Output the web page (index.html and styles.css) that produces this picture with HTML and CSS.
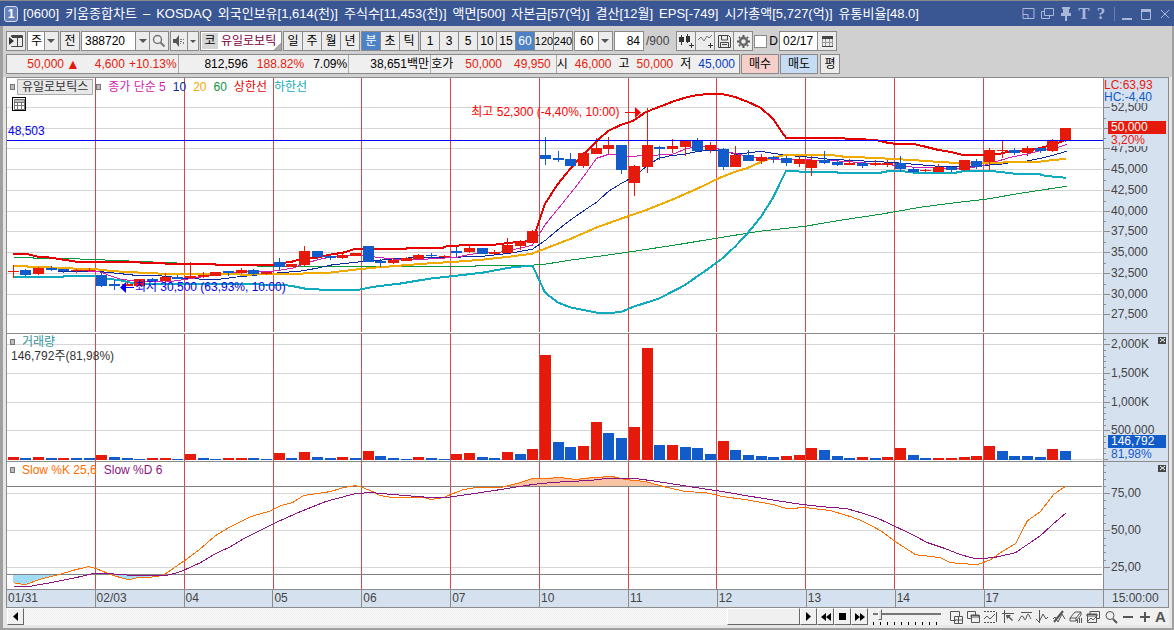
FILE: index.html
```html
<!DOCTYPE html>
<html lang="ko">
<head>
  <meta charset="UTF-8">
  <meta name="viewport" content="width=device-width, initial-scale=1.0">
  <title>[0600] 키움종합차트</title>
  <link rel="stylesheet" href="styles.css">
</head>
<body>

  <header class="titlebar">
    <span class="win-no">1</span>
    <h1 class="title">
      <span>[0600]</span><span>키움종합차트</span><span>–</span><span>KOSDAQ</span>
      <span>외국인보유[1,614(천)]</span><span>주식수[11,453(천)]</span><span>액면[500]</span>
      <span>자본금[57(억)]</span><span>결산[12월]</span><span>EPS[-749]</span>
      <span>시가총액[5,727(억)]</span><span>유통비율[48.0]</span>
    </h1>
    <div class="win-buttons">
      <button aria-label="화면분리"><svg width="13" height="13"><path d="M1 1.5h11v10H1zM1 7.5h5v4" /></svg></button>
      <button aria-label="화면복사"><svg width="14" height="13"><path d="M4.500 1.500h9v7h-9zM4 4.500H1.500v7h8V9" /></svg></button>
      <button aria-label="고정"><svg width="12" height="14"><path class="solid" d="M2 0h8v2H9v4h2v3H1V6h2V2H2zM5 9h2v5H5z" /></svg></button>
      <button class="serif">T</button>
      <button class="serif">?</button>
      <i class="bar"></i>
      <button aria-label="최소화"><svg width="12" height="12"><path class="solid" d="M1 10h10v2H1z" /></svg></button>
      <button aria-label="최대화"><svg width="12" height="12"><path d="M1.500 2v9.500h9V2" /><path class="solid" d="M1 1h10v3H1z" /></svg></button>
      <button aria-label="닫기"><svg width="12" height="12"><path d="M2 2l8 8M10 2l-8 8" /></svg></button>
    </div>
  </header>

  <main class="frame">
    <div class="toolbar">
      <button class="btn" aria-label="목록"><svg width="16" height="14"><path d="M3.500 3V1.500h11v11h-11V12M9.500 2v10" stroke="#444" fill="none" /><path d="M1 3l5 4-5 4z" fill="#333" /><path d="M4 2h10v2H4z" fill="#444" /></svg></button>
      <label class="combo unit"><select aria-label="종목구분"><option>주</option></select><i class="arrow"></i></label>
      <button class="btn">전</button>
      <div class="group">
        <input class="code" type="text" value="388720" aria-label="종목코드">
        <button class="btn drop" aria-label="종목목록"><i class="arrow"></i></button>
        <button class="btn" aria-label="종목검색"><svg width="14" height="14"><circle cx="5.500" cy="5.500" r="4" stroke="#777" stroke-width="1.500" fill="none" /><path d="M8.500 8.500l4 4" stroke="#777" stroke-width="2" /></svg></button>
      </div>
      <div class="group">
        <button class="btn sound" aria-label="음성"><svg width="14" height="12"><path d="M1 4h3l3-4v12L4 8H1z" fill="#555" /><path d="M8 4h2v1H8zM11 4h1v1h-1zM8 6h2v1H8zM11 7h1v2h-1zM8 8h1v1H8z" fill="#777" /></svg></button>
        <button class="btn drop" aria-label="음성설정"><i class="arrow"></i></button>
      </div>
      <div class="stock"><span class="market">코</span><span class="stock-name">유일로보틱</span></div>
      <div class="group">
        <button class="btn">일</button><button class="btn">주</button><button class="btn">월</button><button class="btn">년</button>
      </div>
      <div class="group">
        <button class="btn on">분</button><button class="btn">초</button><button class="btn">틱</button>
      </div>
      <div class="group">
        <button class="btn">1</button><button class="btn">3</button><button class="btn">5</button><button class="btn">10</button><button class="btn">15</button><button class="btn on">60</button><button class="btn narrow">120</button><button class="btn narrow">240</button>
      </div>
      <label class="combo minute"><select aria-label="분"><option>60</option></select><i class="arrow"></i></label>
      <label class="count"><input type="text" value="84" aria-label="봉 개수">/900</label>
      <div class="group tools">
        <button class="btn" aria-label="종목추가"><svg width="17" height="16"><path d="M1 4h5v5H1zM3 2h1v10H3zM8 3h4v6H8zM9 1h1v9H9zM11 12h5v1h-5zM13 10h1v5h-1z" fill="#333" /></svg></button>
        <button class="btn" aria-label="지표추가"><svg width="17" height="16"><path d="M1 7l3-3 3 4 3-5 2 2 3-3" stroke="#777" fill="none" /><path d="M11 12h5v1h-5zM13 10h1v5h-1z" fill="#333" /></svg></button>
        <button class="btn" aria-label="저장"><svg width="15" height="15"><path d="M1.500 1.500h10l2 2v10h-12zM4.500 2v4h6V2M3.500 13V8.500h8V13M5 10.500h5" stroke="#444" fill="none" /></svg></button>
        <button class="btn" aria-label="설정"><svg width="15" height="15"><circle cx="7.500" cy="7.500" r="3.500" stroke="#666" stroke-width="2.500" fill="none" /><path d="M7.500 1v2M7.500 12v2M1 7.500h2M12 7.500h2M3 3l1 1M11 11l1 1M12 3l-1 1M3 12l1-1" stroke="#555" stroke-width="2" /></svg></button>
      </div>
      <label class="check"><input type="checkbox">D</label>
      <div class="group">
        <input class="date" type="text" value="02/17" aria-label="조회일">
        <button class="btn" aria-label="달력"><svg width="13" height="12"><path d="M1 1h11v3H1z" fill="#444" /><path d="M1.500 4v7.500h10V4M4.500 4v7M8.500 4v7M1 7.500h11" stroke="#999" fill="none" /><path d="M1 11h11v1H1z" fill="#444" /></svg></button>
      </div>
    </div>

    <div class="quote-row">
      <div class="quote">
        <div class="cell price"><span>50,000</span><span class="up">▲</span><span class="diff">4,600</span><span>+10.13%</span></div>
        <div class="cell volume"><span>812,596</span><span class="red">188.82%</span><span>7.09%</span></div>
        <div class="cell amount"><span>38,651백만</span></div>
        <div class="cell asks"><span>호가</span><span class="red">50,000</span><span class="red">49,950</span></div>
        <div class="cell ohl"><span>시</span><span class="red">46,000</span><span>고</span><span class="red">50,000</span><span>저</span><span class="blue">45,000</span></div>
      </div>
      <button class="btn buy">매수</button>
      <button class="btn sell">매도</button>
      <button class="btn avg">평</button>
    </div>

    <section class="chart">
      <div class="pane pane-price">
        <div class="plot">
          <svg id="priceChart" viewBox="7 78 1096 255" preserveAspectRatio="none"></svg>
          <div class="legend">
            <i class="dot"></i><span class="legend-name">유일로보틱스</span><i class="dot"></i>
            <span class="ma5">종가 단순 5</span><span class="ma10">10</span><span class="ma20">20</span><span class="ma60">60</span><span class="upper">상한선</span><span class="lower">하한선</span>
          </div>
          <button class="grid-btn" aria-label="데이터 표"><svg width="11" height="11"><path d="M.500.500h10v10H.500zM0 3.500h11M0 6.500h11M3.500 0v11M7.500 0v11" stroke="#777" fill="none" /><path d="M1 1h9v2H1z" fill="#bbb" /></svg></button>
          <span class="line-label">48,503</span>
          <span class="note high">최고 52,300 (-4,40%, 10:00)<svg width="16" height="11"><path d="M0 5h10V0l6 5.500-6 5.500V6H0z" /></svg></span>
          <span class="note low"><svg width="14" height="11"><path d="M14 5H6V0L0 5.500 6 11V6h8z" /></svg>최저 30,500 (63,93%, 10:00)</span>
        </div>
        <div class="axis" id="priceAxis">
          <svg viewBox="0 78 64 255" preserveAspectRatio="none"></svg>
          <div class="corner"><span class="red">LC:63,93</span><span class="sky">HC:-4,40</span></div>
          <div class="tag tag-price"><b>50,000</b><span>3,20%</span></div>
        </div>
      </div>

      <div class="pane pane-volume">
        <div class="plot">
          <svg id="volumeChart" viewBox="7 334 1096 127" preserveAspectRatio="none"></svg>
          <div class="legend"><i class="dot"></i><span class="vol-name">거래량</span></div>
          <span class="vol-value">146,792주(81,98%)</span>
        </div>
        <div class="axis" id="volumeAxis">
          <svg viewBox="0 334 64 127" preserveAspectRatio="none"></svg>
          <button class="close" aria-label="지표 닫기"><svg width="9" height="8"><path d="M2 2l5 4M7 2L2 6" /></svg></button>
          <div class="tag tag-volume"><b>146,792</b><span>81,98%</span></div>
        </div>
      </div>

      <div class="pane pane-slow">
        <div class="plot">
          <svg id="slowChart" viewBox="7 462 1096 127" preserveAspectRatio="none">
            <clipPath id="over"><rect x="7" y="462" width="1050" height="24" /></clipPath>
            <clipPath id="under"><rect x="7" y="574" width="1050" height="15" /></clipPath>
          </svg>
          <div class="legend"><i class="dot"></i><span class="slow-k">Slow %K 25,6</span><span class="slow-d">Slow %D 6</span></div>
        </div>
        <div class="axis" id="slowAxis">
          <svg viewBox="0 462 64 127" preserveAspectRatio="none"></svg>
          <button class="close" aria-label="지표 닫기"><svg width="9" height="8"><path d="M2 2l5 4M7 2L2 6" /></svg></button>
        </div>
      </div>

      <div class="dates">
        <div class="days">
          <span>01/31</span><span>02/03</span><span>04</span><span>05</span><span>06</span><span>07</span><span>10</span><span>11</span><span>12</span><span>13</span><span>14</span><span>17</span>
        </div>
        <span class="time">15:00:00</span>
      </div>
    </section>

    <footer class="bottom">
      <button class="raised" aria-label="왼쪽으로"><svg width="6" height="9"><path d="M5 0v9L0 4.500z" /></svg></button>
      <div class="track"><div class="thumb raised"></div></div>
      <button class="raised" aria-label="오른쪽으로"><svg width="5" height="9"><path d="M0 0v9l5-4.500z" /></svg></button>
      <button class="raised" aria-label="뒤로"><svg width="10" height="8"><path d="M5 0v8L0 4zM10 0v8L5 4z" /></svg></button>
      <button class="raised" aria-label="정지"><svg width="7" height="7"><path d="M0 0h7v7H0z" /></svg></button>
      <button class="raised" aria-label="앞으로"><svg width="10" height="8"><path d="M0 0v8l5-4zM5 0v8l5-4z" /></svg></button>
      <div class="zoom"><input type="range" min="0" max="100" value="8" aria-label="확대"></div>
      <div class="tools-row">
        <button aria-label="화면추가"><svg viewBox="0 0 14 14"><path d="M7 10.500H1.500v-9h9V6M5.500 6.500h8v7h-8zM9.500 7v6M6 10h7" /></svg></button>
        <button aria-label="화면겹침"><svg viewBox="0 0 14 14"><path d="M5 8.500H1.500v-7h8V5M5.500 5.500h8v7h-8z" /><path d="M5 5h8v2H5z" /></svg></button>
        <button aria-label="영역"><svg viewBox="0 0 14 14"><path d="M1 1.500h12M1 12.500h12" stroke-dasharray="2 1" /><path d="M1 9l3-3 3 3 5-5M13.500 2v10" /></svg></button>
        <button aria-label="커서"><svg viewBox="0 0 14 14"><path d="M1 3.500h12M3.500 0v13" /><path class="solid" d="M5 5h5L8.500 6.500 12 10l-1 1-3.500-3.500L6 9z" /></svg></button>
        <button aria-label="수평선"><svg viewBox="0 0 14 14"><path d="M3 2.500h11" /><path d="M0 11c2 0 2-5 4-5s2 4 3 4 2-6 3-6 2 4 3 5" /></svg></button>
        <button aria-label="수직선"><svg viewBox="0 0 14 14"><path d="M4.500 0v13" /><path d="M1 9l3 3 4-8 3 5 2-2" /></svg></button>
        <button aria-label="추세선"><svg viewBox="0 0 14 14"><path d="M2 12L11 1" stroke-width="2" /><path d="M1 9l2-2 3 5 4-8 3 5" /></svg></button>
        <button aria-label="지우기"><svg viewBox="0 0 14 14"><path d="M1 8l5-6h6l-5 6zM1 8v3h6V8M7 11l5-6V2M8.500 13v-3M10.500 13V8M12.500 13V8" /></svg></button>
        <button aria-label="보조창"><svg viewBox="0 0 14 14"><path d="M4 4V1.500h9.500v7H11M1.500 4.500h9v8h-9zM2 11l3-3 2 2 3-3" /><path d="M1 4h10v2H1z" /></svg></button>
        <button aria-label="돋보기"><svg viewBox="0 0 14 14"><circle cx="6" cy="5.500" r="4" /><path d="M9 9l4 4" stroke-width="2" /></svg></button>
        <button aria-label="축소"><svg viewBox="0 0 14 14"><path d="M2 7h10" stroke-width="2" /></svg></button>
        <button aria-label="확대"><svg viewBox="0 0 14 14"><path d="M2 7h10M7 2v10" stroke-width="2" /></svg></button>
        <button class="letter">A</button>
      </div>
    </footer>
  </main>

  <script src="chart.js"></script>
</body>
</html>
```
FILE: styles.css
```css
* {
  box-sizing: border-box;
}

body {
  margin: 0;
  height: 100vh;
  min-height: 400px;
  display: flex;
  flex-direction: column;
  font-family: "Liberation Sans", "Noto Sans CJK KR", sans-serif;
  font-size: 12px;
  line-height: 14px;
  color: #000;
  background-color: #a0a0a0;
  overflow: hidden;
}

button, input, select {
  font: inherit;
  color: inherit;
  margin: 0;
  padding: 0;
  border: none;
  border-radius: 0;
}

button {
  display: flex;
  align-items: center;
  justify-content: center;
  white-space: nowrap;
  cursor: pointer;
  background: none;
}

svg {
  display: block;
  flex-shrink: 0;
}

.red {
  color: #e61a0a;
}

.blue {
  color: #0a3cc8;
}

.sky {
  color: #115bcb;
}

/* Title bar */
.titlebar {
  height: 26px;
  flex-shrink: 0;
  display: flex;
  align-items: center;
  padding: 0 0 0 4px;
  background-color: #3a5693;
  border-top: 1px solid #8a8a8a;
  color: #fff;
}

.win-no {
  width: 14px;
  height: 16px;
  border: 1px solid #d5def0;
  border-radius: 3px;
  background-color: #6681bb;
  font-weight: bold;
  text-align: center;
}

.title {
  display: flex;
  flex: 1;
  gap: 6px;
  margin: 0 0 0 5px;
  font-size: 13px;
  font-weight: normal;
  white-space: nowrap;
}

.win-buttons {
  display: flex;
  align-items: center;
  gap: 1px;
  color: #a9b8d8;
}

.win-buttons button {
  width: 18px;
  height: 20px;
}

.win-buttons path {
  fill: none;
  stroke: #a9b8d8;
}

.win-buttons .solid {
  fill: #a9b8d8;
  stroke: none;
}

.win-buttons .serif {
  width: 16px;
  font: bold 17px "Liberation Serif", serif;
}

.win-buttons .bar {
  width: 1px;
  height: 14px;
  margin: 0 2px 0 4px;
  background-color: #6a80b0;
}

.frame {
  flex: 1;
  min-height: 0;
  display: flex;
  flex-direction: column;
  margin: 0 2px 2px 3px;
  background-color: #e6e6e6;
}

/* Toolbar */
.toolbar, .quote-row {
  display: flex;
  gap: 1px;
  padding-left: 3px;
  background-color: #d0d0d0;
  flex-shrink: 0;
}

.toolbar {
  padding-top: 5px;
  padding-bottom: 3px;
}

.quote-row {
  padding-bottom: 3px;
}

.btn {
  min-width: 20px;
  height: 20px;
  border: 1px solid #8a8a8a;
  background-color: #ececec;
}

.btn.narrow {
  width: 20px;
  font-size: 11px;
}

.group {
  display: flex;
}

.group > * + * {
  margin-left: -1px;
}

.btn.on {
  background-color: #4e82c6;
  color: #fff;
}

.btn.drop {
  min-width: 15px;
}

.btn.sound {
  min-width: 18px;
}

.sound + .btn.drop {
  min-width: 12px;
}

.arrow {
  border: 4px solid transparent;
  border-top-color: #555;
  border-bottom-width: 0;
}

.sound + .drop .arrow {
  border-width: 3px 3px 0;
}

.combo {
  display: flex;
  align-items: center;
  position: relative;
  height: 20px;
  border: 1px solid #8a8a8a;
  background: linear-gradient(to left, #ececec 13px, #8a8a8a 13px, #8a8a8a 14px, #fff 14px);
}

.combo select {
  appearance: none;
  width: 100%;
  height: 18px;
  padding-left: 3px;
  background: none;
}

.combo .arrow {
  position: absolute;
  right: 3px;
  pointer-events: none;
}

.unit {
  width: 32px;
}

.minute {
  width: 39px;
}

.minute select {
  padding-left: 5px;
}

.toolbar input[type="text"] {
  height: 20px;
  border: 1px solid #8a8a8a;
  background-color: #fff;
}

.toolbar .code {
  width: 55px;
  padding-left: 3px;
}

.stock {
  width: 82px;
  height: 20px;
  display: flex;
  align-items: center;
  gap: 3px;
  padding-left: 1px;
  border: 1px solid #8a8a8a;
  background: linear-gradient(315deg, #aaa 5px, #fff 5px);
  white-space: nowrap;
}

.market {
  width: 16px;
  background-color: #d6d6d6;
  text-align: center;
  line-height: 16px;
}

.stock-name {
  flex: 1;
  color: #80003c;
}

.count {
  display: flex;
  align-items: center;
  gap: 2px;
  color: #444;
}

.count input {
  width: 30px;
  padding-right: 3px;
  text-align: right;
  color: #000;
}

.tools {
  margin-left: 6px;
}

.check {
  display: flex;
  align-items: center;
  gap: 2px;
}

.check input {
  appearance: none;
  width: 13px;
  height: 13px;
  border: 1px solid #8a8a8a;
  background-color: #fff;
}

.toolbar .date {
  width: 39px;
  padding-left: 3px;
}

/* Quote row */
.quote {
  display: flex;
  width: 734px;
  height: 20px;
  border: 1px solid #8a8a8a;
  background-color: #efefef;
  white-space: nowrap;
}

.cell {
  display: flex;
  align-items: center;
  justify-content: flex-end;
  padding-right: 1px;
  border-right: 1px solid #aaa;
}

.cell:last-child {
  border-right: none;
}

.price {
  width: 172px;
  color: #e61a0a;
}

.up {
  margin-left: 2px;
  font-size: 14px;
}

.diff {
  margin: 0 4px 0 15px;
}

.volume {
  width: 171px;
  gap: 9px;
}

.amount {
  width: 82px;
}

.asks {
  width: 126px;
  gap: 12px;
  padding-right: 5px;
}

.ohl {
  flex: 1;
  gap: 7px;
  padding-right: 4px;
}

.buy, .sell {
  width: 38px;
}

.buy {
  background-color: #f6cfcb;
}

.sell {
  background-color: #c6dcf4;
}

.avg {
  margin-left: 1px;
}

/* Chart */
.chart {
  flex: 1;
  min-height: 0;
  display: flex;
  flex-direction: column;
  margin: 0 3px;
  border: 1px solid #8c8c8c;
  background-color: #fff;
}

.pane {
  display: flex;
  min-height: 0;
  border-bottom: 1px solid #8c8c8c;
}

.pane-price {
  flex: 256 0 0;
}

.pane-volume, .pane-slow {
  flex: 128 0 0;
}

.plot {
  position: relative;
  flex: 1;
  min-width: 0;
}

.plot > svg:first-child, .axis > svg {
  width: 100%;
  height: 100%;
  position: absolute;
}

.axis {
  position: relative;
  width: 65px;
  border-left: 1px solid #8c8c8c;
  background-color: #d6e1f0;
  color: #444;
}

.axis .scale {
  position: absolute;
  left: 7px;
  transform: translateY(-50%);
}

.legend {
  position: absolute;
  top: 1px;
  left: 3px;
  display: flex;
  align-items: center;
  gap: 7px;
  white-space: nowrap;
}

.dot {
  width: 5px;
  height: 6px;
  border: 1px solid #777;
  background-color: #bbb;
}

.legend-name {
  margin: 0 -4px 0 -5px;
  padding: 0 4px;
  border: 1px solid #aaa;
  background-color: #e8e8e8;
  color: #333;
}

.ma5 { color: #d21eb4; }
.ma10 { color: #0a28a0; }
.ma20 { color: #f0aa00; }
.ma60 { color: #0a963c; }
.upper { color: #e60000; }
.lower { color: #0faabe; }
.vol-name { color: #32969b; }
.slow-k { color: #ff6e00; }
.slow-d { color: #8c1482; }

.grid-btn {
  position: absolute;
  top: 19px;
  left: 5px;
  width: 14px;
  height: 14px;
  border: 1px solid #000;
  background-color: #fff;
}

.line-label {
  position: absolute;
  top: 46px;
  left: 1px;
  color: #0000e6;
}

.note {
  position: absolute;
  display: flex;
  align-items: center;
  gap: 5px;
  white-space: nowrap;
}

.high {
  top: 27px;
  right: 42.2%;
  color: #f00;
}

.high path {
  fill: #f00;
}

.low {
  top: 202px;
  left: 10.3%;
  gap: 1px;
  color: #0000e6;
}

.low path {
  fill: #00f;
}

.vol-value {
  position: absolute;
  top: 15px;
  left: 4px;
  color: #333;
}

.corner {
  position: absolute;
  top: 1px;
  left: 0;
  display: flex;
  flex-direction: column;
  line-height: 12px;
  background-color: #d6e1f0;
  z-index: 1;
}

.tag {
  position: absolute;
  left: 4px;
  right: 2px;
  display: flex;
  flex-direction: column;
  line-height: 12px;
  z-index: 1;
}

.tag b {
  padding-left: 3px;
  font-weight: normal;
  line-height: 13px;
  color: #fff;
}

.tag span {
  padding-left: 3px;
  background-color: #d6e1f0;
}

.tag-price {
  top: 43px;
  color: #e61a0a;
}

.tag-price b {
  background-color: #e61a0a;
}

.tag-volume {
  bottom: 1px;
  color: #115bcb;
}

.tag-volume b {
  background-color: #115bcb;
}

.close {
  position: absolute;
  top: 3px;
  right: 2px;
  width: 8px;
  height: 7px;
  background-color: #444;
}

.close path {
  fill: none;
  stroke: #fff;
}

.dates {
  display: flex;
  height: 17px;
  background-color: #d6e1f0;
  color: #444;
  line-height: 16px;
}

.days {
  flex: 1;
  display: flex;
}

.days span {
  flex: 888 0 0;
  padding-left: 1px;
  border-left: 1px solid #8c8c8c;
}

.days span:first-child {
  flex-grow: 885;
  border-left: none;
}

.days span:last-child {
  flex-grow: 1200;
}

.time {
  width: 65px;
  padding-left: 8px;
  border-left: 1px solid #8c8c8c;
}

/* Bottom bar */
.bottom {
  display: flex;
  height: 17px;
  margin: 0 3px 3px 4px;
  background-color: #f0f0f0;
  flex-shrink: 0;
}

.raised {
  width: 17px;
  height: 17px;
  border: 1px solid;
  border-color: #fff #666 #666 #fff;
  background-color: #f0f0f0;
  flex-shrink: 0;
}

.track {
  flex: 1;
  display: flex;
  justify-content: flex-end;
  background: repeating-conic-gradient(#fff 0 25%, #ebebeb 0 50%) 0 0 / 2px 2px;
}

.thumb {
  width: 73px;
}

.zoom {
  width: 70px;
  margin-left: 4px;
  padding: 0 1px;
  background: repeating-linear-gradient(to right, #000 0 1px, transparent 1px 7px) 1px 14px / 67px 3px no-repeat;
}

.zoom input {
  appearance: none;
  display: block;
  width: 100%;
  height: 13px;
  background: linear-gradient(#777, #777) 0 5px / 100% 2px no-repeat;
}

.zoom input::-webkit-slider-thumb {
  appearance: none;
  width: 4px;
  height: 11px;
  border: 1px solid;
  border-color: #fff #666 #666 #fff;
  background-color: #e0e0e0;
}

.tools-row {
  display: flex;
  width: 227px;
  justify-content: space-between;
  padding: 0 3px 0 7px;
}

.tools-row svg {
  width: 14px;
  height: 14px;
}

.tools-row path, .tools-row circle {
  fill: none;
  stroke: #555;
}

.tools-row .solid {
  fill: #555;
  stroke: none;
}

.letter {
  font-size: 15px;
  font-weight: bold;
  color: #555;
}

/* Chart shapes */
.grid { fill: #d6d6d6; }
.limit { fill: #808080; }
.day { fill: #d84646; }
.rise { fill: #e61a0a; }
.fall { fill: #115bcb; }
.tick { fill: #8c8c8c; }
.base { fill: #00f; }
.over { fill: #f8c4a4; }
.under { fill: #a0dcf5; }

.line {
  fill: none;
  stroke-width: 1px;
}

.line.bold {
  stroke-width: 2px;
}

.line.ma5 { stroke: #d21eb4; }
.line.ma10 { stroke: #0a28a0; }
.line.ma20 { stroke: #f0aa00; }
.line.ma60 { stroke: #0a963c; }
.line.upper { stroke: #e60000; }
.line.lower { stroke: #0faabe; }
.line.slow-k { stroke: #ff6e00; }
.line.slow-d { stroke: #8c1482; }
```
FILE: chart.js
```js
const SVG = 'http://www.w3.org/2000/svg';
const LEFT = 8;
const STEP = 12.68;
const BAR = 11;

// kind, body top, body bottom, high, low
const candles = [
  'r 271 272 265 278', 'b 270 275 269 276', 'r 268 274 267 275', 'b 268 270 266 271', 'b 269 271 269 273', 'r 270 271 269 273', 'r 270 271 268 271',
  'b 275 286 272 287', 'b 284 286 280 290', 'r 284 286 282 286', 'r 279 286 279 286', 'b 279 281 278 282', 'r 277 281 273 282', 'b 277 279 275 279',
  'r 276 278 262 279', 'r 275 277 272 278', 'r 272 276 272 276', 'b 271 273 271 276', 'r 270 273 268 274', 'b 270 274 269 276', 'r 272 274 272 275',
  'b 262 267 258 271', 'r 264 267 264 267', 'r 251 265 246 266', 'b 251 257 251 259', 'b 256 258 255 260', 'r 255 258 254 259', 'r 253 256 253 256',
  'b 246 262 246 262', 'b 261 263 259 267', 'r 260 263 258 264', 'r 258 261 257 261', 'r 255 259 254 260', 'b 255 256 253 258', 'r 256 257 255 259',
  'b 251 253 247 257', 'r 248 252 246 253', 'b 248 254 248 254', 'r 252 254 250 254', 'r 245 253 238 253', 'r 242 246 240 250', 'r 231 243 230 243',
  'b 155 159 137 165', 'b 158 160 151 162', 'b 159 166 153 166', 'r 153 166 152 168', 'r 148 154 138 154', 'r 145 149 137 154', 'b 145 170 145 174',
  'r 166 183 165 196', 'r 145 167 108 173', 'b 147 149 146 160', 'r 146 149 139 153', 'r 141 147 140 156', 'b 141 151 138 152', 'r 145 150 142 153',
  'b 149 167 148 170', 'r 155 167 146 167', 'b 155 161 150 161', 'r 157 161 154 164', 'b 157 159 156 163', 'b 158 163 156 166', 'r 159 164 156 167',
  'r 160 168 156 176', 'b 160 163 151 164', 'b 162 165 160 166', 'r 163 165 159 165', 'b 163 166 162 168', 'r 163 165 160 166', 'r 163 165 160 167',
  'b 163 169 156 172', 'b 169 172 167 173', 'r 170 171 169 172', 'r 167 172 164 172', 'b 167 170 166 172', 'r 160 170 160 171', 'b 161 167 159 169',
  'r 150 162 148 170', 'r 150 151 141 158', 'b 150 153 148 155', 'r 148 153 146 156', 'b 148 151 148 153', 'r 141 151 139 152', 'r 128 140 128 142'
];

// kind (against the previous bar) and bar top
const volumes = (
  'r457 b458 r457 b458 r458 b458 b458 r455 b457 b458 b459 r458 r458 b459 ' +
  'r454 b458 b459 r458 r458 b458 b459 r453 b458 r452 b457 b458 r457 b458 ' +
  'r451 b456 b458 b459 r457 b458 b459 r454 r453 b457 b458 r452 b454 r449 ' +
  'r355 b442 b447 r446 r422 b433 b438 r427 r348 b445 r445 b447 b448 b454 ' +
  'r441 b450 b455 b456 b457 r456 r455 r448 b450 b456 b458 r457 b458 r457 ' +
  'r448 b455 b458 r458 r458 r457 r456 r446 b451 b456 b456 b457 r449 b451'
).split(' ');

const lines = {
  ma60: '13,257 32,257 33,258 87,259 107,260 180,263 260,266 475,266 476,265 532,265 545,264 570,260 628,252 680,244 716,238 760,231 805,226 840,220 880,214 920,207 950,203 985,199 1020,193 1066,186',
  ma10: '57,271 95,271 115,273 133,275 165,276 180,278 200,279 220,279 235,277 255,275 275,273 300,271 317,268 330,265 356,262 380,260 400,258 457,257 483,256 510,253 532,249 545,240 558,229 571,219 584,210 596,202 608,191 621,183 634,176 646,166 658,158 672,155 684,154 697,151 710,150 725,151 735,154 760,151 773,153 786,155 811,157 830,159 850,160 890,162 915,164 938,166 970,166 985,165 1000,164 1012,162 1025,161 1040,158 1052,155 1066,151',
  ma5: '76,270 101,272 108,275 120,279 135,281 165,282 180,280 200,277 215,275 240,272 273,271 292,268 305,263 320,259 335,256 350,255 362,255 375,257 395,259 425,259 457,257 470,254 500,252 520,248 532,245 545,224 558,208 571,192 584,175 596,158 608,154 630,156 650,155 672,154 684,149 697,146 715,147 722,151 735,153 750,157 773,159 830,160 870,163 895,165 915,167 950,168 965,168 980,166 990,163 1010,157 1025,154 1045,149 1055,148 1066,144',
  ma20: '13,266 25,266 28,267 54,268 76,269 90,269 108,271 120,272 140,273 160,274 250,275 270,274 300,274 330,273 355,270 375,268 400,266 425,264 457,262 483,260 510,257 532,254 545,249 571,239 596,228 621,219 647,210 672,200 697,189 722,177 735,172 748,168 761,162 773,158 786,155 830,155 845,157 875,158 890,159 910,160 938,162 955,163 1000,163 1010,162 1038,162 1055,160 1066,159',
  lower: '13,277 63,277 64,276 92,276 101,278 108,279 122,281 135,284 160,284 270,285 290,286 305,289 320,290 360,290 375,287 400,284 430,279 457,276 483,273 510,268 530,266 533,267 545,293 558,303 571,308 596,313 608,314 622,312 634,307 659,299 684,286 710,268 722,259 735,247 748,233 761,217 773,198 786,171 797,171 800,172 837,172 838,173 880,173 890,171 900,171 915,173 955,173 965,171 988,171 1000,172 1015,174 1038,174 1045,176 1055,177 1066,178',
  upper: '13,254 25,254 38,257 51,258 63,260 76,262 140,262 141,263 165,263 166,264 215,264 216,265 273,265 285,263 292,262 302,259 317,258 330,255 343,253 356,249 406,249 408,248 443,248 444,247 457,246 470,245 495,245 511,243 525,242 532,238 536,231 545,204 558,184 571,168 584,154 596,142 608,131 621,125 633,121 646,112 659,107 672,102 684,98 697,95 710,94 722,94 735,97 748,102 761,108 773,119 786,138 837,138 850,139 875,140 888,143 896,144 913,144 926,147 938,150 950,152 962,155 985,155 1000,154 1008,152 1021,151 1032,150 1045,147 1055,144 1066,140'
};

const slowD = '13,586 27,586 50,582 75,577 92,573 110,573 135,575 165,575 180,571 200,562 215,553 230,546 245,537 273,523 300,511 325,501 355,493 370,492 405,495 430,497 445,497 460,495 480,492 500,489 525,485 540,483 565,481 590,480 605,478 635,478 650,480 670,483 695,487 722,491 745,495 770,499 795,503 820,506 846,508 860,512 878,518 895,526 910,533 927,542 945,548 960,554 975,558 993,557 1015,552 1040,535 1053,523 1066,512';
const slowK = '13,582 25,584 38,579 58,574 75,569 88,566 96,568 108,573 117,576 128,579 137,577 157,576 165,573 184,560 200,548 215,535 230,526 250,516 268,511 280,505 292,502 303,495 330,491 343,487 355,485 362,487 372,491 380,495 392,497 425,497 430,499 443,497 450,494 463,489 475,487 500,487 508,485 520,482 532,478 545,478 560,477 575,479 593,477 612,476 625,479 645,481 663,486 685,491 705,492 722,496 745,499 773,504 786,508 805,507 830,510 850,516 861,520 880,530 895,541 915,554 940,557 950,562 977,564 990,559 1000,552 1015,543 1027,520 1040,511 1053,494 1066,485';

const days = [95, 184, 273, 361, 450, 539, 628, 716, 805, 894, 983];

function add(svg, name, attrs) {
  const el = document.createElementNS(SVG, name);
  for (const key in attrs) {
    el.setAttribute(key, attrs[key]);
  }
  svg.appendChild(el);
  return el;
}

function rect(svg, cls, x, y, width, height) {
  add(svg, 'rect', { class: cls, x, y, width, height, 'shape-rendering': 'crispEdges' });
}

function line(svg, cls, points, bold) {
  add(svg, 'polyline', {
    class: 'line ' + cls + (bold ? ' bold' : ''),
    points,
    transform: bold ? 'translate(0 0)' : 'translate(.5 .5)',
    'vector-effect': 'non-scaling-stroke',
    'shape-rendering': 'crispEdges'
  });
}

function gridLines(svg, rows, top, height) {
  rows.forEach(y => rect(svg, 'grid', 7, y, 1095, 1));
  days.forEach(x => rect(svg, 'day', x, top, 1, height));
}

function drawAxis(id, top, height, labels, minor) {
  const axis = document.getElementById(id);
  const svg = axis.querySelector('svg');
  minor.forEach(y => rect(svg, 'tick', 0, y, 2, 1));
  labels.forEach(([y, text]) => {
    rect(svg, 'tick', 0, y, 6, 1);
    if (!text) return;
    const span = document.createElement('span');
    span.className = 'scale';
    span.textContent = text;
    span.style.top = (y - top) / height * 100 + '%';
    axis.appendChild(span);
  });
}

// Price
const priceRows = [
  [107, '52,500'], [128, ''], [148, '47,500'], [169, '45,000'], [190, '42,500'], [211, '40,000'],
  [231, '37,500'], [252, '35,000'], [273, '32,500'], [294, '30,000'], [314, '27,500']
];
const price = document.getElementById('priceChart');
gridLines(price, priceRows.map(row => row[0]), 78, 255);
['ma60', 'ma10', 'ma5', 'ma20', 'lower', 'upper'].forEach(name => {
  line(price, name, lines[name], ['ma20', 'lower', 'upper'].includes(name));
});
candles.forEach((candle, i) => {
  const [kind, top, bottom, high, low] = candle.split(' ');
  const cls = kind === 'r' ? 'rise' : 'fall';
  const x = Math.floor(LEFT + STEP * i);
  rect(price, cls, x, top, BAR, bottom - top);
  rect(price, cls, x + 5, high, 1, low - high);
});
rect(price, 'base', 7, 140, 1096, 1);
drawAxis('priceAxis', 78, 255, priceRows, [118, 138, 159, 180, 201, 221, 242, 263, 284, 304]);

// Volume
const volumeRows = [[344, '2,000K'], [373, '1,500K'], [402, '1,000K'], [430, '500,000'], [459, '']];
const volume = document.getElementById('volumeChart');
gridLines(volume, volumeRows.map(row => row[0]), 334, 127);
volumes.forEach((bar, i) => {
  const y = Number(bar.slice(1));
  rect(volume, bar[0] === 'r' ? 'rise' : 'fall', Math.floor(LEFT + STEP * i), y, BAR, 460 - y);
});
drawAxis('volumeAxis', 334, 127, volumeRows,
  [339, 350, 356, 361, 367, 379, 384, 390, 396, 407, 413, 419, 425, 436, 442, 448, 453]);

// Slow stochastic
const slow = document.getElementById('slowChart');
gridLines(slow, [493, 530, 567], 462, 127);
add(slow, 'polygon', { class: 'over', points: '13,486 ' + slowK + ' 1066,486', 'clip-path': 'url(#over)' });
add(slow, 'polygon', { class: 'under', points: '13,574 ' + slowK + ' 1066,574', 'clip-path': 'url(#under)' });
rect(slow, 'limit', 7, 486, 1095, 1);
rect(slow, 'limit', 7, 574, 1095, 1);
line(slow, 'slow-k', slowK);
line(slow, 'slow-d', slowD);
drawAxis('slowAxis', 462, 127, [[493, '75,00'], [530, '50,00'], [567, '25,00']],
  [465, 472, 479, 486, 500, 508, 515, 523, 538, 545, 552, 560]);
```
